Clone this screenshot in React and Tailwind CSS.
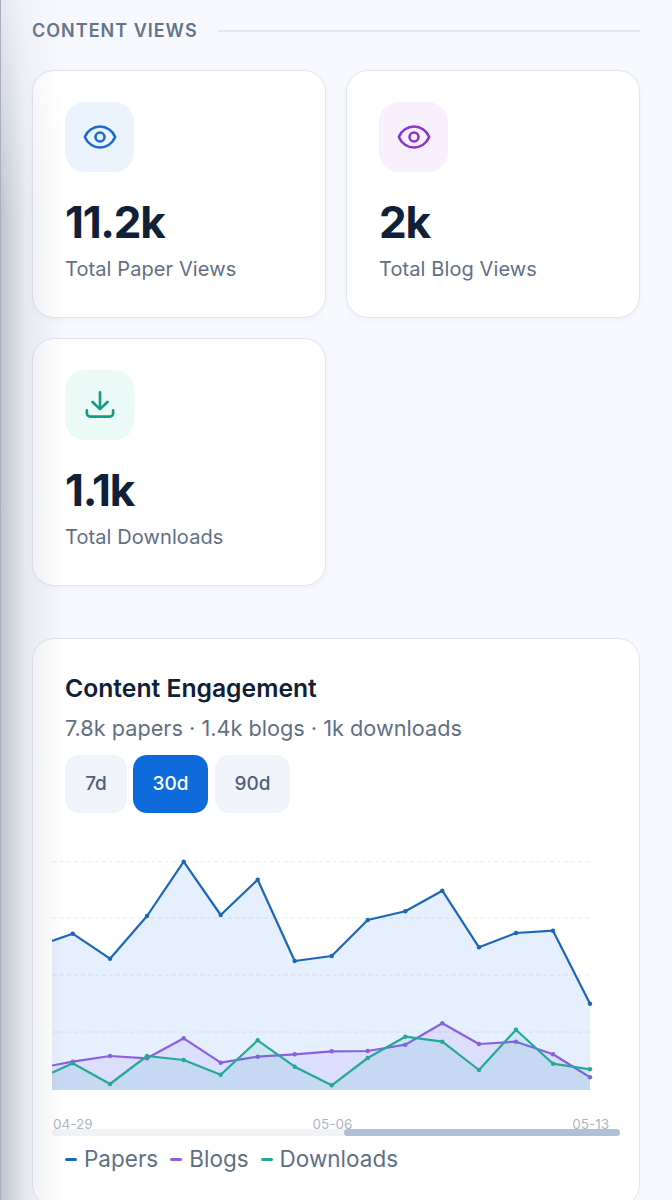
import { Eye } from "lucide-react";

const xs = [72.7, 110, 147, 183.7, 220.7, 257.7, 294.7, 331.7, 367.7, 405.3, 442.3, 479, 516, 553, 590];

const papers = [933.7, 958.7, 916, 861.7, 915, 879.7, 961, 956, 920, 911.3, 890.7, 947.3, 933, 930.7, 1003.7];
const blogs = [1061.7, 1056, 1058.3, 1038.3, 1062.7, 1056.7, 1054.3, 1051.3, 1051, 1044.7, 1023.3, 1044, 1041.7, 1054.3, 1077.3];
const downloads = [1063.3, 1084, 1056, 1060, 1074.7, 1040.3, 1066.7, 1085.3, 1058, 1036.7, 1041.7, 1070, 1029.7, 1063.7, 1069.3];

const series = [
  { name: "Papers", color: "#1a66b8", fill: "#1a6cf0", start: 941, data: papers },
  { name: "Blogs", color: "#8b5fe0", fill: "#8b5cf6", start: 1065.5, data: blogs },
  { name: "Downloads", color: "#25a898", fill: "#14b8a6", start: 1072.7, data: downloads },
];

const gridLines = [861.5, 918, 975, 1032];

const DownloadIcon = () => (
  <svg width="36" height="36" viewBox="0 0 24 24" fill="none" stroke="#159a86" strokeWidth="1.75" strokeLinecap="round" strokeLinejoin="round">
    <path d="M12 3.5v11" />
    <path d="M7 10l5 4.75L17 10" />
    <path d="M3.25 15.5v2a2.25 2.25 0 0 0 2.25 2.25h13a2.25 2.25 0 0 0 2.25-2.25v-2" />
  </svg>
);

const StatCard = ({ icon, iconBg, value, label }) => (
  <div className="h-[248px] rounded-[22px] border border-[#dfe6f0] bg-white pt-[31px] pl-8 shadow-[0_2px_6px_rgba(15,32,56,0.04)]">
    <div className={`flex h-[70px] w-[69px] items-center justify-center rounded-[20px] ${iconBg}`}>{icon}</div>
    <div className="mt-[20px] text-[44px] leading-[60px] font-bold tracking-[-1.3px] text-[#0f2038]">{value}</div>
    <div className="mt-[3px] text-[20px] leading-[28px] tracking-[0.1px] text-[#5f6f85]">{label}</div>
  </div>
);

const Chart = () => (
  <svg width="568" height="240" viewBox="52 855 568 240" className="block">
    {gridLines.map((y) => (
      <line key={y} x1="53" x2="590" y1={y} y2={y} stroke="#e8ebf0" strokeDasharray="4 3" />
    ))}
    {series.map((s) => {
      const line = s.data.map((y, i) => `${xs[i]},${y}`).join(" ");
      return (
        <g key={s.name}>
          <polygon points={`52,1090 52,${s.start} ${line} 590,1090`} fill={s.fill} fillOpacity="0.11" />
          <polyline points={`52,${s.start} ${line}`} fill="none" stroke={s.color} strokeWidth="2.2" strokeLinejoin="round" />
          {s.data.map((y, i) => (
            <circle key={i} cx={xs[i]} cy={y} r="2.2" fill={s.color} />
          ))}
        </g>
      );
    })}
  </svg>
);

export default function App() {
  return (
    <div className="relative h-[1200px] overflow-hidden bg-[#f7f9fe] px-8 pt-[17px] font-['Inter',sans-serif]">
      {/* shadow of the drawer sitting on the left, fainter near the top */}
      <div className="pointer-events-none absolute inset-y-0 left-0 z-10 w-[64px] bg-[linear-gradient(to_right,rgba(150,158,172,0.6),rgba(170,176,188,0.22)_40%,transparent)] [mask-image:linear-gradient(to_bottom,rgba(0,0,0,0.3),black_220px)]" />
      <div className="pointer-events-none absolute inset-y-0 left-0 z-10 w-px bg-[#a8afbe]" />

      <div className="flex items-center gap-5">
        <h2 className="text-[18px] leading-[28px] font-semibold tracking-[1px] text-[#64748b]">CONTENT VIEWS</h2>
        <div className="h-[2px] flex-1 bg-[#e2e8f2]" />
      </div>

      <div className="mt-[25px] grid grid-cols-2 gap-5">
        <StatCard icon={<Eye size={36} strokeWidth={1.75} color="#1a6ad0" />} iconBg="bg-[#ebf3fd]" value="11.2k" label="Total Paper Views" />
        <StatCard icon={<Eye size={36} strokeWidth={1.75} color="#8a35cc" />} iconBg="bg-[#f8f1fd]" value="2k" label="Total Blog Views" />
        <StatCard icon={<DownloadIcon />} iconBg="bg-[#ebfaf7]" value="1.1k" label="Total Downloads" />
      </div>

      <div className="mt-[52px] rounded-[22px] border border-[#dfe6f0] bg-white px-8 pt-8 pb-8">
        <h3 className="text-[24.7px] leading-[34px] font-semibold text-[#0f2038]">Content Engagement</h3>
        <p className="mt-[7px] text-[21.7px] leading-[32px] text-[#5f6f85]">7.8k papers · 1.4k blogs · 1k downloads</p>

        <div className="mt-[11px] flex gap-[6px]">
          <button className="h-[58px] w-[62px] rounded-[14px] bg-[#f1f5fb] text-[19px] font-medium text-[#4f6078]">7d</button>
          <button className="h-[58px] w-[75px] rounded-[14px] bg-[#0f6bdc] text-[19px] font-medium text-white">30d</button>
          <button className="ml-px h-[58px] w-[75px] rounded-[14px] bg-[#f1f5fb] text-[19px] font-medium text-[#4f6078]">90d</button>
        </div>

        <div className="-mx-[13px] mt-[42px]">
          <Chart />
          <div className="mt-[21px] flex justify-between pr-[11px] pl-px text-[13.5px] leading-[16px] text-[#adb5bf]">
            <span>04-29</span>
            <span>05-06</span>
            <span>05-13</span>
          </div>
          <div className="-mt-[3px] flex h-[7px] justify-end rounded-full bg-[#f0f2f5]">
            <div className="h-full w-[276px] rounded-full bg-[#b0c0d4]" />
          </div>
        </div>

        <div className="mt-2 flex gap-[12px] text-[22.5px] leading-[30px] text-[#5f6f85]">
          {series.map((s) => (
            <div key={s.name} className="flex items-center gap-[7px]">
              <span className="h-[3px] w-[12px] rounded-full" style={{ backgroundColor: s.color }} />
              {s.name}
            </div>
          ))}
        </div>
      </div>
    </div>
  );
}
